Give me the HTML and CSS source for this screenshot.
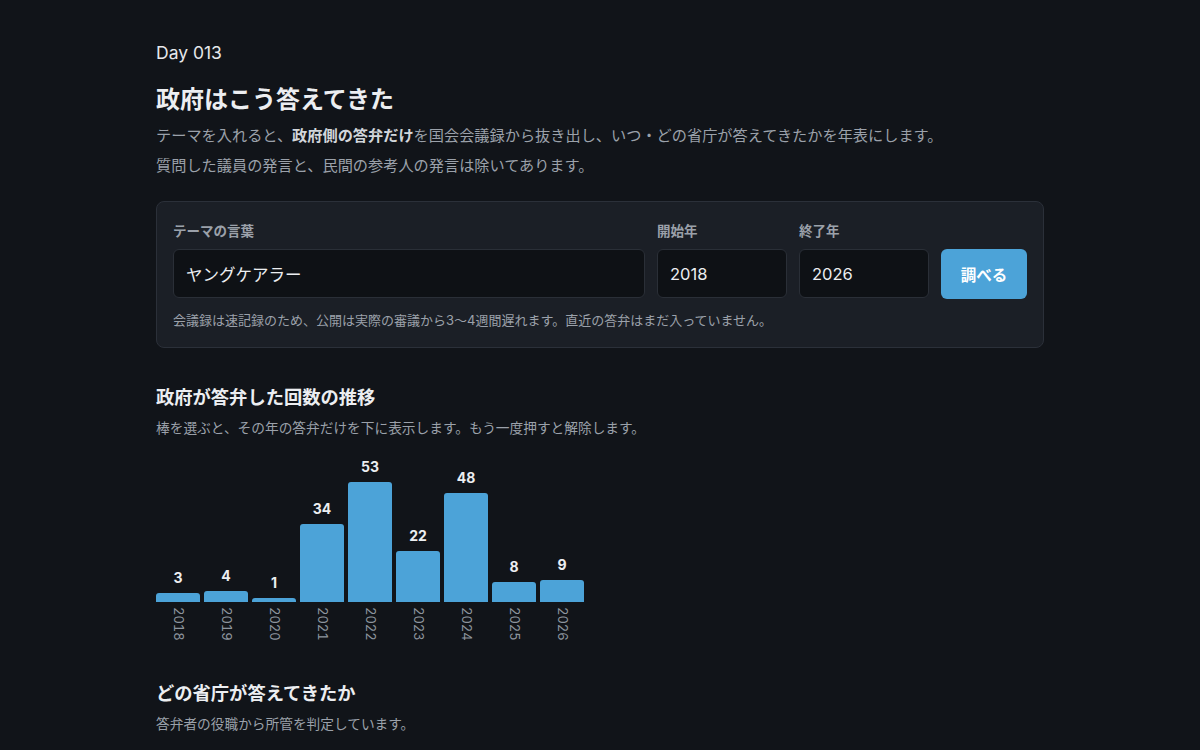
FILE: index.html
```html
<!DOCTYPE html>
<html lang="ja">
<head>
<meta charset="utf-8">
<title>政府はこう答えてきた</title>
<link rel="stylesheet" href="styles.css">
</head>
<body>
<main class="page">
  <p class="day">Day 013</p>
  <h1 class="title">政府はこう答えてきた</h1>
  <p class="desc">テーマを入れると、<strong>政府側の答弁だけ</strong>を国会会議録から抜き出し、いつ・どの省庁が答えてきたかを年表にします。<br>質問した議員の発言と、民間の参考人の発言は除いてあります。</p>

  <section class="panel">
    <div class="form">
      <label class="field field-theme">
        <span class="lbl">テーマの言葉</span>
        <input class="input" type="text" value="ヤングケアラー">
      </label>
      <label class="field field-year">
        <span class="lbl">開始年</span>
        <input class="input" type="text" value="2018">
      </label>
      <label class="field field-year">
        <span class="lbl">終了年</span>
        <input class="input" type="text" value="2026">
      </label>
      <button class="btn" type="button">調べる</button>
    </div>
    <p class="note">会議録は速記録のため、公開は実際の審議から3〜4週間遅れます。直近の答弁はまだ入っていません。</p>
  </section>

  <section class="section">
    <h2 class="h2">政府が答弁した回数の推移</h2>
    <p class="sub">棒を選ぶと、その年の答弁だけを下に表示します。もう一度押すと解除します。</p>
    <div class="chart">
      <div class="col"><span class="val">3</span><div class="bar" style="height:9px"></div><span class="year">2018</span></div>
      <div class="col"><span class="val">4</span><div class="bar" style="height:11px"></div><span class="year">2019</span></div>
      <div class="col"><span class="val">1</span><div class="bar" style="height:4.5px"></div><span class="year">2020</span></div>
      <div class="col"><span class="val">34</span><div class="bar" style="height:78px"></div><span class="year">2021</span></div>
      <div class="col"><span class="val">53</span><div class="bar" style="height:120px"></div><span class="year">2022</span></div>
      <div class="col"><span class="val">22</span><div class="bar" style="height:51px"></div><span class="year">2023</span></div>
      <div class="col"><span class="val">48</span><div class="bar" style="height:109px"></div><span class="year">2024</span></div>
      <div class="col"><span class="val">8</span><div class="bar" style="height:20px"></div><span class="year">2025</span></div>
      <div class="col"><span class="val">9</span><div class="bar" style="height:22px"></div><span class="year">2026</span></div>
    </div>
  </section>

  <section class="section section-2">
    <h2 class="h2">どの省庁が答えてきたか</h2>
    <p class="sub">答弁者の役職から所管を判定しています。</p>
  </section>
</main>
</body>
</html>
```

FILE: styles.css
```css
html, body {
  margin: 0;
  padding: 0;
  background: #111419;
  color: #e8eaed;
  font-family: Inter, "Noto Sans CJK JP", sans-serif;
}

.page {
  max-width: 888px;
  margin: 0 auto;
  padding-top: 41px;
}

.day {
  margin: 0;
  font-size: 17.5px;
  line-height: 24px;
  color: #e6e8eb;
}

.title {
  margin: 19px 0 0;
  font-size: 24px;
  line-height: 32px;
  font-weight: 700;
  color: #eceef1;
}

.desc {
  margin: 5px 0 0;
  font-size: 15.2px;
  line-height: 30px;
  color: #9ba1aa;
}

.desc strong {
  color: #d2d6db;
  font-weight: 700;
}

.panel {
  margin-top: 20px;
  background: #1b1f26;
  border: 1px solid #2b3039;
  border-radius: 8px;
  padding: 18px 16px 17px;
}

.form {
  display: flex;
  align-items: flex-end;
  gap: 12px;
}

.field {
  display: flex;
  flex-direction: column;
  gap: 7px;
}

.field-theme {
  flex: 1;
}

.field-year {
  width: 130px;
}

.lbl {
  font-size: 13.5px;
  line-height: 22px;
  font-weight: 700;
  color: #9ba1aa;
}

.input {
  box-sizing: border-box;
  width: 100%;
  height: 49px;
  margin: 0;
  padding: 0 12px;
  background: #0e1115;
  border: 1px solid #2a2f37;
  border-radius: 6px;
  color: #eceef1;
  font-family: Inter, "Noto Sans CJK JP", sans-serif;
  font-size: 16.5px;
  outline: none;
}

.btn {
  box-sizing: border-box;
  width: 86px;
  height: 50px;
  margin-bottom: -0.5px;
  border: none;
  border-radius: 6px;
  background: #4ca3d8;
  color: #ffffff;
  font-family: Inter, "Noto Sans CJK JP", sans-serif;
  font-size: 15.5px;
  font-weight: 700;
}

.note {
  margin: 12px 0 0;
  font-size: 13px;
  line-height: 20px;
  color: #9ba1aa;
}

.section {
  margin-top: 36px;
}

.section-2 {
  margin-top: 40px;
}

.h2 {
  margin: 0;
  font-size: 18.3px;
  line-height: 26px;
  font-weight: 700;
  color: #eceef1;
}

.sub {
  margin: 8px 0 0;
  font-size: 13.7px;
  line-height: 20px;
  color: #9ba1aa;
}

.chart {
  display: flex;
  align-items: flex-end;
  gap: 4px;
  margin-top: 20px;
}

.col {
  width: 44px;
  display: flex;
  flex-direction: column;
  align-items: center;
}

.val {
  font-size: 14px;
  line-height: 18px;
  font-weight: 700;
  color: #eceef1;
  margin-bottom: 6px;
}

.bar {
  width: 100%;
  background: #4ca3d8;
  border-radius: 3px 3px 0 0;
}

.year {
  writing-mode: vertical-rl;
  box-sizing: border-box;
  height: 38px;
  padding-top: 5px;
  font-size: 13px;
  line-height: 1;
  color: #8d949e;
  font-variant-numeric: tabular-nums;
}
```
